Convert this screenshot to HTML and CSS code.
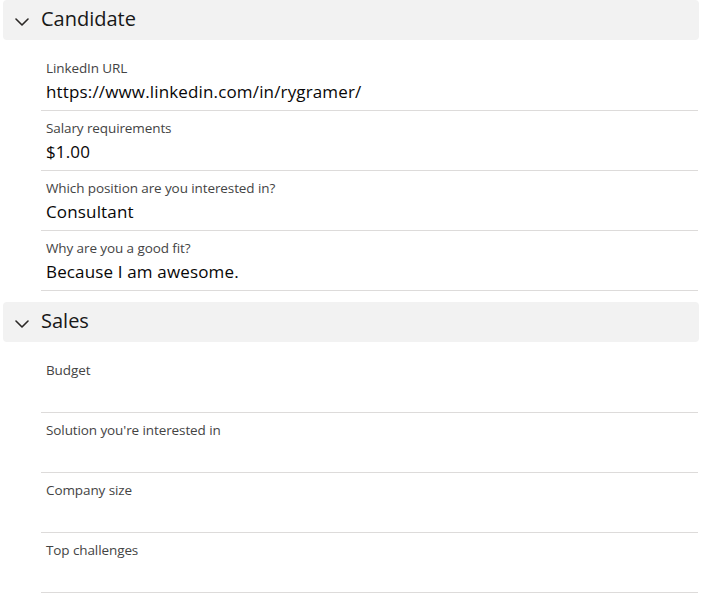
FILE: index.html
```html
<!DOCTYPE html>
<html>
<head>
<meta charset="utf-8">
<link rel="stylesheet" href="styles.css">
</head>
<body>
<div class="page">
  <section class="section">
    <div class="section-header">
      <svg class="chevron" width="14" height="8" viewBox="0 0 14 8"><path d="M1 1 L7 7 L13 1" fill="none" stroke="#2b2826" stroke-width="1.6" stroke-linecap="round" stroke-linejoin="round"/></svg>
      <span class="section-title">Candidate</span>
    </div>
    <div class="fields">
      <div class="field"><div class="label">LinkedIn URL</div><div class="value">https://www.linkedin.com/in/rygramer/</div></div>
      <div class="field"><div class="label">Salary requirements</div><div class="value">$1.00</div></div>
      <div class="field"><div class="label">Which position are you interested in?</div><div class="value">Consultant</div></div>
      <div class="field"><div class="label">Why are you a good fit?</div><div class="value">Because I am awesome.</div></div>
    </div>
  </section>
  <section class="section">
    <div class="section-header">
      <svg class="chevron" width="14" height="8" viewBox="0 0 14 8"><path d="M1 1 L7 7 L13 1" fill="none" stroke="#2b2826" stroke-width="1.6" stroke-linecap="round" stroke-linejoin="round"/></svg>
      <span class="section-title">Sales</span>
    </div>
    <div class="fields">
      <div class="field"><div class="label">Budget</div><div class="value"></div></div>
      <div class="field"><div class="label">Solution you're interested in</div><div class="value"></div></div>
      <div class="field"><div class="label">Company size</div><div class="value"></div></div>
      <div class="field"><div class="label">Top challenges</div><div class="value"></div></div>
    </div>
  </section>
</div>
</body>
</html>
```
FILE: styles.css
```css
html, body {
  margin: 0;
  padding: 0;
  background: #ffffff;
}
body {
  font-family: "Open Sans", "Liberation Sans", sans-serif;
  color: #080707;
}
.page {
  padding: 0 6px 0 3px;
}
.section-header {
  height: 40px;
  box-sizing: border-box;
  padding: 0 0 2px 12px;
  background: #f2f2f2;
  border-radius: 4px;
  display: flex;
  align-items: center;
  gap: 12px;
}
.chevron {
  display: block;
  margin-top: 5px;
}
.section-title {
  font-size: 20px;
  line-height: 24px;
  color: #181818;
}
.fields {
  margin: 11px 1px 11px 38px;
}
.field {
  height: 60px;
  box-sizing: border-box;
  border-bottom: 1px solid #dddbda;
  padding: 8px 4px 0 5px;
}
.label {
  font-size: 13.5px;
  line-height: 18px;
  letter-spacing: -0.1px;
  color: #444444;
}
.value {
  font-size: 17px;
  line-height: 24px;
  letter-spacing: 0.15px;
  margin-top: 3px;
  min-height: 24px;
  color: #080707;
}
```
